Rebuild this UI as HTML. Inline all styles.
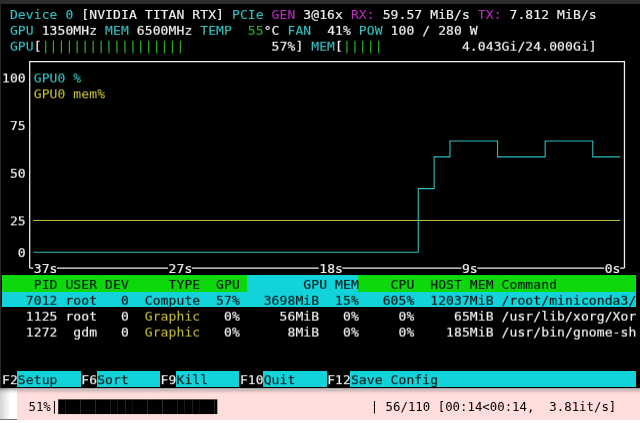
<!DOCTYPE html>
<html lang="en"><head><meta charset="utf-8"><title>nvtop</title>
<style>

html,body{margin:0;padding:0;}
body{width:640px;height:423px;overflow:hidden;background:#fff;position:relative;}
#term{position:absolute;left:0;top:0;width:640px;height:387.7px;background:#000;overflow:hidden;}
#topbar{position:absolute;left:0;top:0;width:640px;height:3.8px;background:#2d2d2d;}
#leftbar{position:absolute;left:0;top:0;width:1px;height:387.7px;background:#2a2a2a;}
#grid{will-change:transform;position:absolute;left:1.5px;top:5.6px;width:640px;height:384px;transform-origin:0 0;transform:scale(1.0863013698630137,0.9925);
 font-family:"DejaVu Sans Mono","Liberation Mono",monospace;font-size:12.0px;line-height:16px;color:#f2f2f2;white-space:pre;letter-spacing:0.0754px;}
.r{position:absolute;left:0;width:640px;height:16px;}
.r span{position:absolute;top:1.2px;height:16px;display:block;-webkit-text-stroke:0.15px currentColor;}
.r span.t{-webkit-text-stroke:0.08px currentColor;}
.bg{position:absolute;display:block;}
#lines{position:absolute;left:0;top:0;}
#prompt{position:absolute;left:0;top:387.7px;width:17.2px;height:31.9px;background:linear-gradient(90deg,#d4d4d4,#fff 62%);border-bottom:1px solid #777;box-sizing:border-box;}
#out{position:absolute;left:17.2px;top:390px;width:622.8px;height:29.6px;background:#fdd;}
#shadow{position:absolute;left:0;top:387.7px;width:640px;height:6.2px;background:linear-gradient(rgba(0,0,0,.42),rgba(0,0,0,.2) 30%,rgba(0,0,0,.07) 68%,rgba(0,0,0,0));}
#out pre{position:absolute;left:4.0px;top:4.5px;margin:0;will-change:transform;font-family:"DejaVu Sans Mono","Liberation Mono",monospace;font-size:12.37px;line-height:25px;color:#000;white-space:pre;}

</style></head><body>
<div id="term"><div id="topbar"></div><div id="leftbar"></div>
<i class="bg" style="left:1.50px;top:275.2px;width:245.83px;height:16.70px;background:#0cd80c"></i>
<i class="bg" style="left:247.33px;top:275.2px;width:111.02px;height:16.70px;background:#12d2da"></i>
<i class="bg" style="left:358.35px;top:275.2px;width:277.55px;height:16.70px;background:#0cd80c"></i>
<i class="bg" style="left:1.50px;top:291.7px;width:634.40px;height:15.30px;background:#12d2da"></i>
<i class="bg" style="left:17.36px;top:371.2px;width:63.44px;height:15.60px;background:#12d2da"></i>
<i class="bg" style="left:96.66px;top:371.2px;width:63.44px;height:15.60px;background:#12d2da"></i>
<i class="bg" style="left:175.96px;top:371.2px;width:63.44px;height:15.60px;background:#12d2da"></i>
<i class="bg" style="left:263.19px;top:371.2px;width:63.44px;height:15.60px;background:#12d2da"></i>
<i class="bg" style="left:350.42px;top:371.2px;width:285.48px;height:15.60px;background:#12d2da"></i>
<div id="grid">
<div class="r" style="top:0px"><span class="t" style="left:7.300px;color:#36c4c4">Device 0</span><span style="left:73.000px;color:#f2f2f2">[NVIDIA TITAN RTX]</span><span class="t" style="left:211.700px;color:#36c4c4">PCIe</span><span class="t" style="left:248.200px;color:#bb2cbb">GEN</span><span style="left:277.400px;color:#f2f2f2">3@16x</span><span class="t" style="left:321.200px;color:#bb2cbb">RX:</span><span style="left:350.400px;color:#f2f2f2">59.57 MiB/s</span><span class="t" style="left:438.000px;color:#bb2cbb">TX:</span><span style="left:467.200px;color:#f2f2f2">7.812 MiB/s</span></div>
<div class="r" style="top:16px"><span class="t" style="left:7.300px;color:#36c4c4">GPU</span><span style="left:36.500px;color:#f2f2f2">1350MHz</span><span class="t" style="left:94.900px;color:#36c4c4">MEM</span><span style="left:124.100px;color:#f2f2f2">6500MHz</span><span class="t" style="left:182.500px;color:#36c4c4">TEMP</span><span class="t" style="left:226.300px;color:#2eb42e">55</span><span style="left:240.900px;color:#f2f2f2">°C</span><span class="t" style="left:262.800px;color:#36c4c4">FAN</span><span style="left:299.300px;color:#f2f2f2">41%</span><span class="t" style="left:328.500px;color:#36c4c4">POW</span><span style="left:357.700px;color:#f2f2f2">100 / 280 W</span></div>
<div class="r" style="top:32px"><span class="t" style="left:7.300px;color:#36c4c4">GPU</span><span style="left:29.200px;color:#f2f2f2">[</span><span class="t" style="left:36.500px;color:#2eb42e">||||||||||||||||||</span><span style="left:248.200px;color:#f2f2f2">57%]</span><span class="t" style="left:284.700px;color:#36c4c4">MEM</span><span style="left:306.600px;color:#f2f2f2">[</span><span class="t" style="left:313.900px;color:#2eb42e">|||||</span><span style="left:423.400px;color:#f2f2f2">4.043Gi/24.000Gi]</span></div>
<div class="r" style="top:64px"><span style="left:0.000px;color:#f2f2f2">100</span><span class="t" style="left:29.200px;color:#36c4c4">GPU0 %</span></div>
<div class="r" style="top:80px"><span class="t" style="left:29.200px;color:#c6be3a">GPU0 mem%</span></div>
<div class="r" style="top:112px"><span style="left:7.300px;color:#f2f2f2">75</span></div>
<div class="r" style="top:160px"><span style="left:7.300px;color:#f2f2f2">50</span></div>
<div class="r" style="top:208px"><span style="left:7.300px;color:#f2f2f2">25</span></div>
<div class="r" style="top:240px"><span style="left:14.600px;color:#f2f2f2">0</span></div>
<div class="r" style="top:256px"><span style="left:29.200px;color:#f2f2f2">37s</span><span style="left:153.300px;color:#f2f2f2">27s</span><span style="left:292.000px;color:#f2f2f2">18s</span><span style="left:423.400px;color:#f2f2f2">9s</span><span style="left:554.800px;color:#f2f2f2">0s</span></div>
<div class="r" style="top:272px"><span style="left:29.200px;color:#001a1a">PID</span><span style="left:58.400px;color:#001a1a">USER</span><span style="left:94.900px;color:#001a1a">DEV</span><span style="left:153.300px;color:#001a1a">TYPE</span><span style="left:197.100px;color:#001a1a">GPU</span><span style="left:277.400px;color:#001a1a">GPU MEM</span><span style="left:357.700px;color:#001a1a">CPU</span><span style="left:394.200px;color:#001a1a">HOST MEM</span><span style="left:459.900px;color:#001a1a">Command</span></div>
<div class="r" style="top:288px"><span style="left:21.900px;color:#001a1a">7012</span><span style="left:58.400px;color:#001a1a">root</span><span style="left:109.500px;color:#001a1a">0</span><span style="left:131.400px;color:#001a1a">Compute</span><span style="left:197.100px;color:#001a1a">57%</span><span style="left:240.900px;color:#001a1a">3698MiB</span><span style="left:306.600px;color:#001a1a">15%</span><span style="left:350.400px;color:#001a1a">605%</span><span style="left:394.200px;color:#001a1a">12037MiB</span><span style="left:459.900px;color:#001a1a">/root/miniconda3/</span></div>
<div class="r" style="top:304px"><span style="left:21.900px;color:#f2f2f2">1125</span><span style="left:58.400px;color:#f2f2f2">root</span><span style="left:109.500px;color:#f2f2f2">0</span><span class="t" style="left:131.400px;color:#c6be3a">Graphic</span><span style="left:204.400px;color:#f2f2f2">0%</span><span style="left:255.500px;color:#f2f2f2">56MiB</span><span style="left:313.900px;color:#f2f2f2">0%</span><span style="left:365.000px;color:#f2f2f2">0%</span><span style="left:416.100px;color:#f2f2f2">65MiB</span><span style="left:459.900px;color:#f2f2f2">/usr/lib/xorg/Xor</span></div>
<div class="r" style="top:320px"><span style="left:21.900px;color:#f2f2f2">1272</span><span style="left:65.700px;color:#f2f2f2">gdm</span><span style="left:109.500px;color:#f2f2f2">0</span><span class="t" style="left:131.400px;color:#c6be3a">Graphic</span><span style="left:204.400px;color:#f2f2f2">0%</span><span style="left:262.800px;color:#f2f2f2">8MiB</span><span style="left:313.900px;color:#f2f2f2">0%</span><span style="left:365.000px;color:#f2f2f2">0%</span><span style="left:408.800px;color:#f2f2f2">185MiB</span><span style="left:459.900px;color:#f2f2f2">/usr/bin/gnome-sh</span></div>
<div class="r" style="top:368px"><span style="left:0.000px;color:#f2f2f2">F2</span><span style="left:14.600px;color:#001a1a">Setup</span><span style="left:73.000px;color:#f2f2f2">F6</span><span style="left:87.600px;color:#001a1a">Sort</span><span style="left:146.000px;color:#f2f2f2">F9</span><span style="left:160.600px;color:#001a1a">Kill</span><span style="left:219.000px;color:#f2f2f2">F10</span><span style="left:240.900px;color:#001a1a">Quit</span><span style="left:299.300px;color:#f2f2f2">F12</span><span style="left:321.200px;color:#001a1a">Save Config</span></div>
</div>
<svg id="lines" width="640" height="389" viewBox="0 0 640 389" fill="none" stroke-width="1.25"><path stroke="#f2f2f2" d="M29.70 268.07V61.63H624.46V268.07"/><path stroke="#f2f2f2" d="M29.70 268.07H33.22M57.01 268.07H168.03M191.82 268.07H318.70M342.49 268.07H461.44M477.30 268.07H604.18M620.04 268.07H624.46"/><path stroke-width="1" stroke="#c4c44a" d="M33.22 220.43H620.04"/><path stroke-width="1.1" stroke="#2fbcbc" d="M33.22 252.19L418.27 252.19L418.27 188.67L434.13 188.67L434.13 156.91L449.99 156.91L449.99 141.03L497.57 141.03L497.57 156.91L545.15 156.91L545.15 141.03L592.74 141.03L592.74 156.91L620.04 156.91"/></svg>
</div>
<div id="prompt"></div>
<div id="out"><pre> 51%|█████████████████████▍                    | 56/110 [00:14&lt;00:14,  3.81it/s]</pre></div><div id="shadow"></div>
</body></html>
